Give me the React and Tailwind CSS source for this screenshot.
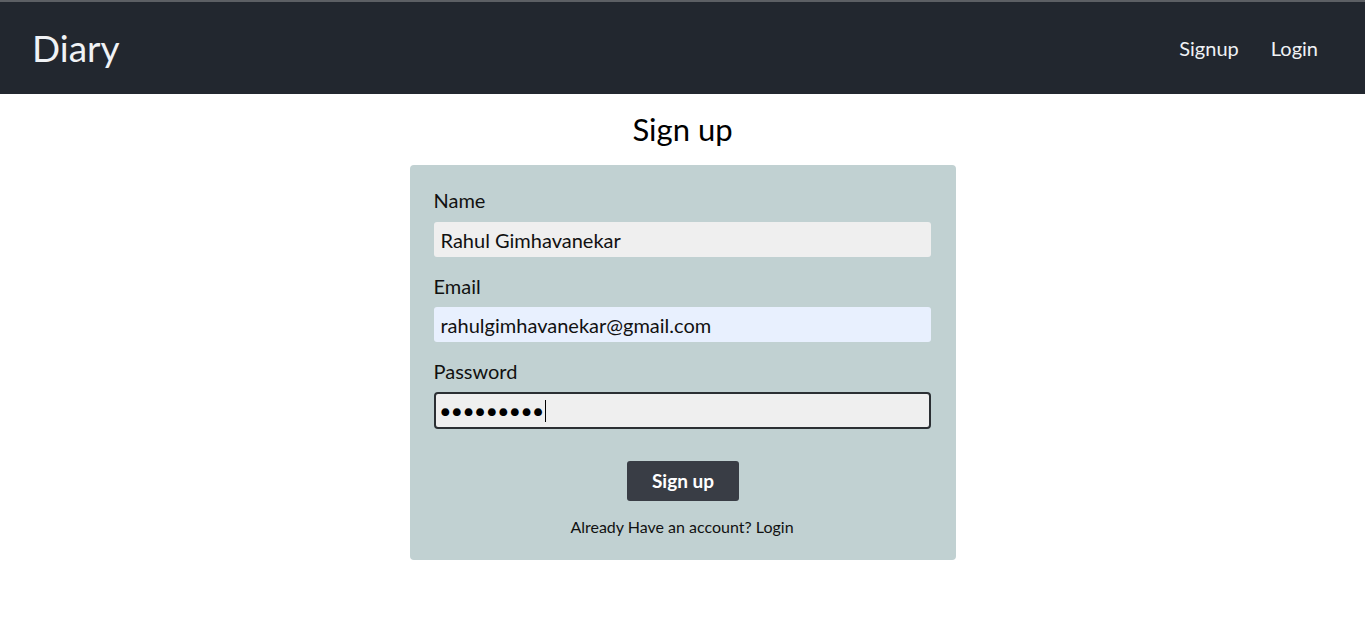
export default function App() {
  const font = { fontFamily: "Lato, 'Noto Sans', sans-serif" };
  return (
    <div className="min-h-[621px] bg-white" style={font}>
      <nav className="h-[94px] bg-[#22272f] border-t-2 border-[#5c5f64] flex items-center justify-between pl-[32px] pr-[47px]">
        <span className="text-[37px] text-[#f0f2f5] leading-none pb-[2px]">Diary</span>
        <div className="flex items-center gap-[32px] text-[20px] text-[#f0f2f5]">
          <span>Signup</span>
          <span>Login</span>
        </div>
      </nav>
      <div className="flex flex-col items-center">
        <h1 className="text-[31px] text-black leading-none mt-[15px] mb-[16px] h-[40px] flex items-center">Sign up</h1>
        <div className="w-[546px] h-[395px] bg-[#c1d1d2] rounded-[4px] pl-[24px] pr-[25px] pt-[20px]">
          <label className="block text-[20px] leading-[30px] text-[#111]">Name</label>
          <div className="mt-[7px] h-[35px] bg-[#efefef] rounded-[3px] flex items-center pl-[7px] text-[20px] text-[#111]">Rahul Gimhavanekar</div>
          <label className="block mt-[14px] text-[20px] leading-[30px] text-[#111]">Email</label>
          <div className="mt-[6px] h-[35px] bg-[#e8f0fe] rounded-[3px] flex items-center pl-[7px] text-[20px] text-[#111]">rahulgimhavanekar@gmail.com</div>
          <label className="block mt-[14px] text-[20px] leading-[30px] text-[#111]">Password</label>
          <div className="mt-[6px] h-[37px] bg-[#efefef] rounded-[4px] border-2 border-[#2b2f33] flex items-center pl-[5px] text-[#000]">
            <span className="text-[16px] tracking-[2px] leading-none">●●●●●●●●●</span>
            <span className="w-[1px] h-[22px] bg-black"></span>
          </div>
          <div className="flex justify-center mt-[32px]">
            <button className="w-[112px] h-[40px] bg-[#393d45] rounded-[3px] text-white text-[19px] font-bold ml-[2px]">Sign up</button>
          </div>
          <p className="text-center text-[16px] text-[#111] mt-[14px] leading-[24px]">Already Have an account? Login</p>
        </div>
      </div>
    </div>
  );
}
